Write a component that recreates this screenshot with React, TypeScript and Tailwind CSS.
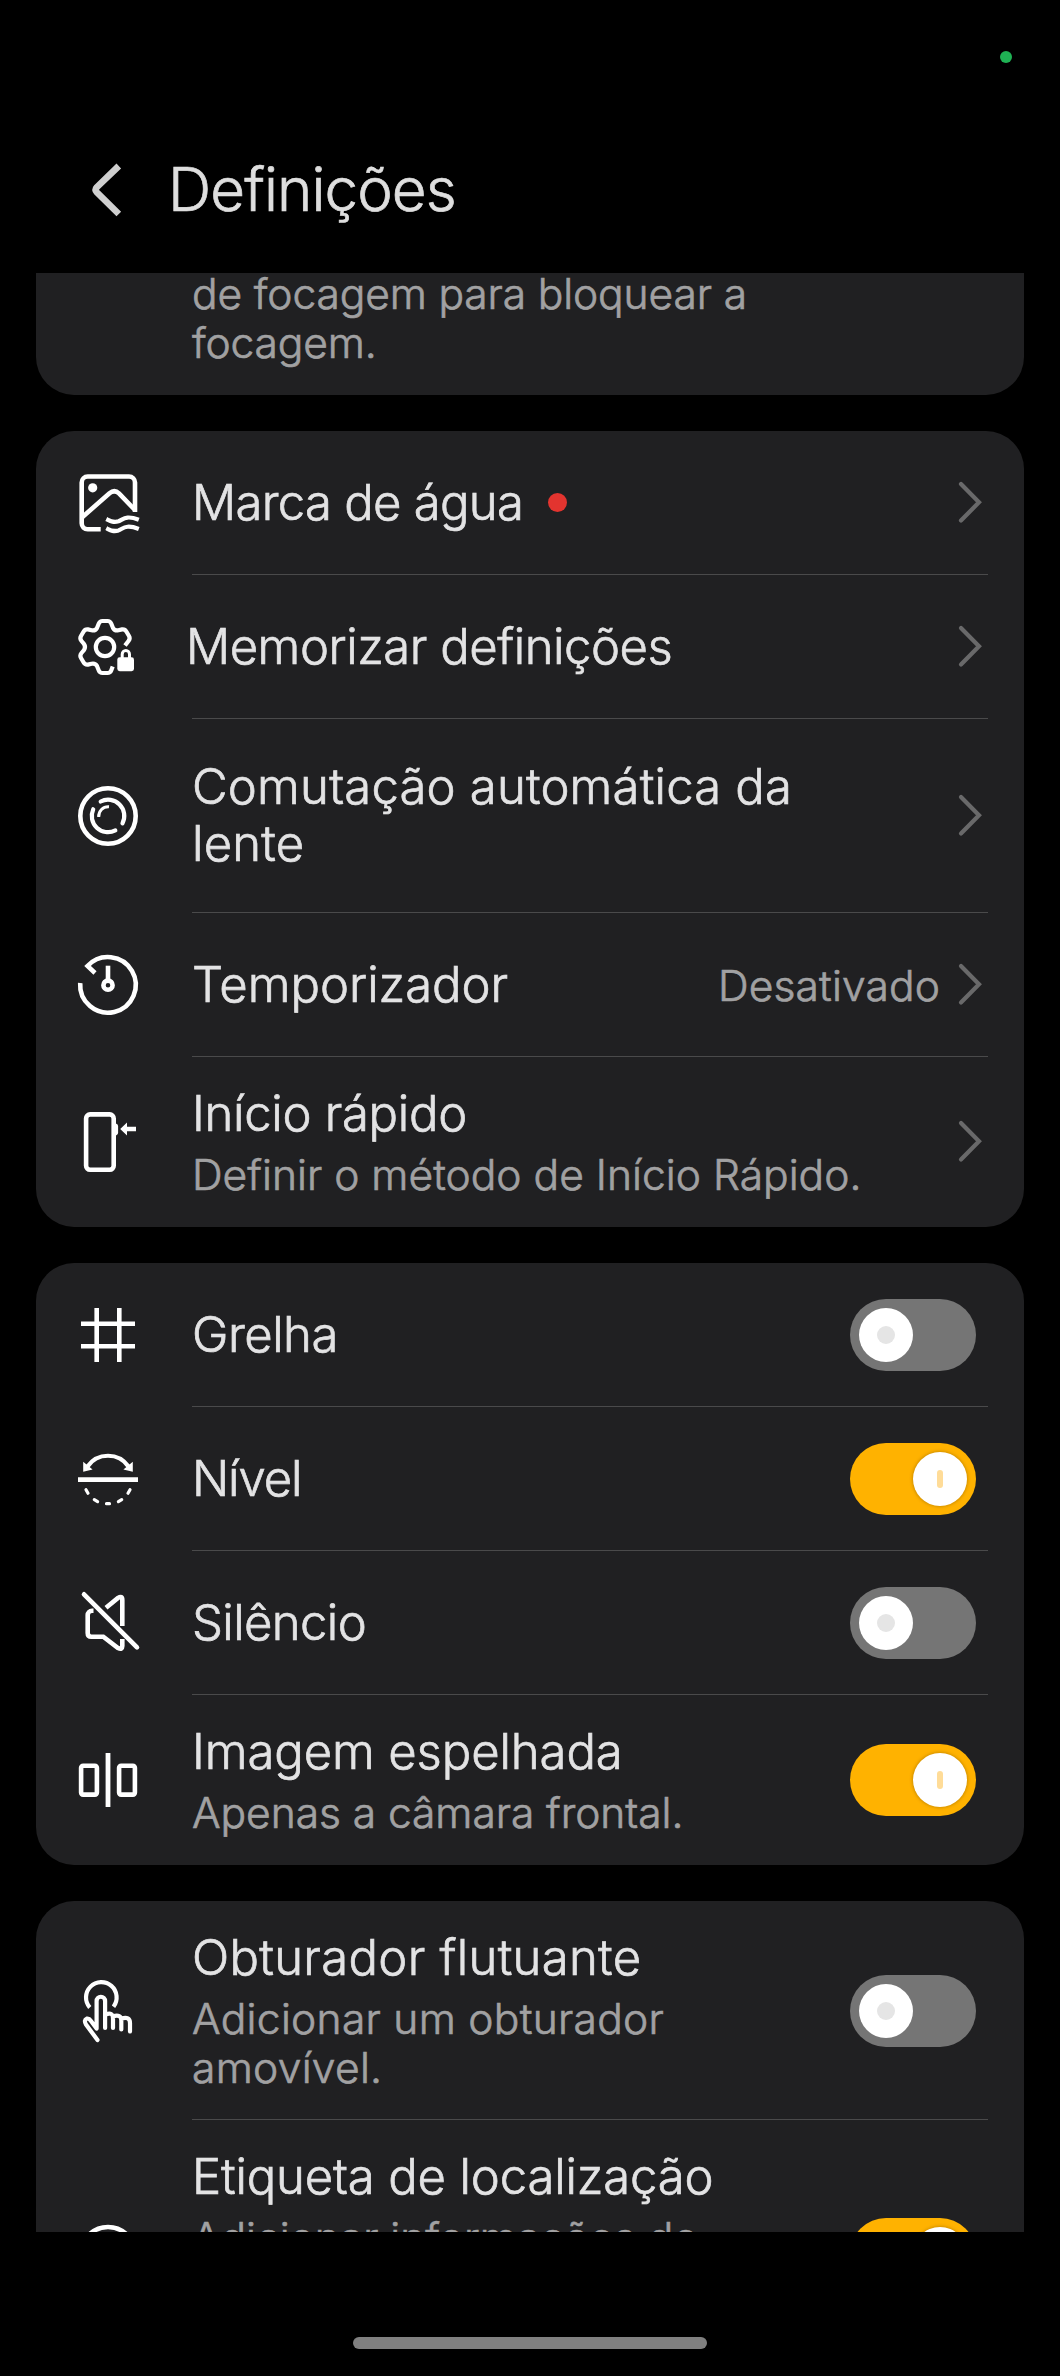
import type { ReactNode } from "react";

type Row = {
  id: string;
  title: string;
  titleClass?: string;
  description?: string;
  descriptionClass?: string;
  icon: ReactNode;
  value?: string;
  badge?: boolean;
  checked?: boolean;
};

function Icon({ children }: { children: ReactNode }) {
  return (
    <svg
      viewBox="0 0 72 72"
      className="size-[72px] shrink-0"
      fill="none"
      stroke="#fff"
      strokeWidth="4.6"
      aria-hidden
    >
      {children}
    </svg>
  );
}

const watermarkIcon = (
  <Icon>
    <path d="M63 45V15.5a6 6 0 0 0-6-6H15.7a6 6 0 0 0-6 6v40.8a6 6 0 0 0 6 6h13" />
    <path d="M10.5 50 37.5 26.2q5-4 9.5.2L63.5 43.5" />
    <circle cx="20.7" cy="20.8" r="4.6" fill="#fff" stroke="none" />
    <path
      d="M34.3 52c4 2 7 4 12.2 2.2c5-2 7.5-6.4 20.3-1.4M34.3 61.2c4 2 7 4 12.2 2.2c5-2 7.5-6.4 20.3-1.4"
      strokeWidth="4.2"
    />
  </Icon>
);

const gearLockIcon = (
  <Icon>
    <path
      d="M53 34.5 56.5 30Q58.5 27.5 57 25L54.5 20.7Q53 18 50 18.4L46.5 19.3Q42.5 20 41 17L39.2 12.5Q38.2 10 35.5 10H30.5Q27.8 10 26.8 12.5L25 17Q23.5 20 19.5 19.3L16 18.4Q13 18 11.5 20.7L9 25Q7.5 27.5 9.5 30L12 33Q14 36 12 39L9.5 42Q7.5 44.5 9 47L11.5 51.3Q13 54 16 53.6L19.5 52.7Q23.5 52 25 55L26.8 59.5Q27.8 62 30.5 62H35.5Q38.2 62 39.2 59.5L40.7 55.5"
      strokeWidth="4.2"
    />
    <circle cx="33" cy="36" r="9.2" strokeWidth="4.2" />
    <rect x="45.3" y="46.3" width="16.7" height="13.9" rx="2.4" fill="#fff" stroke="none" />
    <path d="M50.2 47.5v-4.3a3.65 3.65 0 0 1 7.3 0v4.3" strokeWidth="3" />
  </Icon>
);

const lensIcon = (
  <Icon>
    <circle cx="36" cy="36" r="27.7" />
    <path
      d="M28.7 21.5A16.2 16.2 0 0 1 50.5 43.3M21.2 29.3A16.2 16.2 0 0 0 43.3 50.4"
      strokeWidth="4.2"
      strokeLinecap="round"
    />
    <path d="M26.7 37A9.6 9.6 0 0 1 37 26.7" strokeWidth="3" />
  </Icon>
);

const timerIcon = (
  <Icon>
    <path d="M8.2 34A27.8 27.8 0 1 0 15.5 17L23 24" />
    <path d="M36 16.7V31" />
    <circle cx="36" cy="36.2" r="4.6" />
  </Icon>
);

const quickLaunchIcon = (
  <Icon>
    <rect x="14.1" y="8.4" width="27.6" height="55.4" rx="4" />
    <path d="M43 17.3q3.1.6 3.1 3.2v6q0 2.6-3.1 3.2z" fill="#fff" stroke="none" />
    <path d="M48.2 23 55 16.6V20.8H64V25.3H55V29.4Z" fill="#fff" stroke="none" />
  </Icon>
);

const gridIcon = (
  <Icon>
    <path d="M24.7 9v54M47.3 9v54M9 24.7h54M9 47.2h54" />
  </Icon>
);

const levelIcon = (
  <Icon>
    <path d="M6 36.7h60" strokeWidth="4.8" />
    <path d="M15.5 23.5A24.9 24.9 0 0 1 56.5 23.5" strokeWidth="4.2" />
    <path d="M11.2 18.8V28.8L20.6 26.4ZM60.8 18.8V28.8L51.4 26.4Z" fill="#fff" stroke="none" />
    <path
      d="M14 46.7l2 3.5M22.3 56.6l3.3 2M34.5 60.7h3M49.7 56.6l-3.3 2M58 46.7l-2 3.5"
      strokeWidth="3.2"
      strokeLinecap="round"
    />
  </Icon>
);

const muteIcon = (
  <Icon>
    <path d="M34 20.8 46 10.9Q50.3 8.3 50.3 13V39" />
    <path d="M21.5 23.8H20a4.3 4.3 0 0 0-4.3 4.3V46q0 3.7 3.6 3.7H31.3L46 61Q50.3 63.3 50.3 59V52" />
    <path d="M12 7.3 65 60.4" strokeLinecap="round" />
  </Icon>
);

const mirrorIcon = (
  <Icon>
    <rect x="9.1" y="21.8" width="15.8" height="28.8" rx="2" />
    <rect x="47.1" y="21.8" width="15.8" height="28.8" rx="2" />
    <path d="M36 9v54" strokeWidth="4.8" />
  </Icon>
);

const touchIcon = (
  <Icon>
    <g strokeWidth="4.2" strokeLinecap="round" strokeLinejoin="round">
      <path d="M17.8 32.5A15.3 15.3 0 1 1 41.5 31.7" strokeLinecap="butt" />
      <path d="M25.5 65 14 49.5Q11.5 45 14.8 43.6Q17 43 19 46L24.6 53.5V26a4.25 4.25 0 0 1 8.5 0V53" />
      <path d="M33.5 39.5Q41 36.5 41 43.5V53M41 41.3Q49.3 39 49.3 45.5V54.5M49.3 43.5Q58 41 58 48V56.5" />
    </g>
  </Icon>
);

const locationIcon = (
  <Icon>
    <path d="M36 66C20 53 9.5 45 9.5 34.5a26.5 25.5 0 0 1 53 0C62.5 45 52 53 36 66Z" />
    <circle cx="36" cy="34" r="9" />
  </Icon>
);

const shootingRows: Row[] = [
  {
    id: "watermark",
    title: "Marca de água",
    titleClass: "tracking-[-0.7px]",
    icon: watermarkIcon,
    badge: true,
  },
  {
    id: "memory",
    title: "Memorizar definições",
    titleClass: "-ml-1.5 tracking-[-0.45px]",
    icon: gearLockIcon,
  },
  {
    id: "lens",
    title: "Comutação automática da\nlente",
    titleClass: "tracking-[0.2px]",
    icon: lensIcon,
  },
  { id: "timer", title: "Temporizador", icon: timerIcon, value: "Desativado" },
  {
    id: "quick",
    title: "Início rápido",
    titleClass: "tracking-[-0.3px]",
    description: "Definir o método de Início Rápido.",
    descriptionClass: "tracking-[0.03px]",
    icon: quickLaunchIcon,
  },
];

const displayRows: Row[] = [
  { id: "grid", title: "Grelha", titleClass: "tracking-[-0.5px]", icon: gridIcon, checked: false },
  { id: "level", title: "Nível", titleClass: "tracking-[-1.1px]", icon: levelIcon, checked: true },
  { id: "mute", title: "Silêncio", titleClass: "tracking-[-0.6px]", icon: muteIcon, checked: false },
  {
    id: "mirror",
    title: "Imagem espelhada",
    titleClass: "tracking-[-0.1px]",
    description: "Apenas a câmara frontal.",
    descriptionClass: "tracking-[-0.05px]",
    icon: mirrorIcon,
    checked: true,
  },
];

const extraRows: Row[] = [
  {
    id: "floating",
    title: "Obturador flutuante",
    titleClass: "tracking-[0.3px]",
    description: "Adicionar um obturador\namovível.",
    descriptionClass: "tracking-[0.3px]",
    icon: touchIcon,
    checked: false,
  },
  {
    id: "location",
    title: "Etiqueta de localização",
    titleClass: "tracking-[-0.15px]",
    description: "Adicionar informações de\nlocalização às fotografias\ne vídeos.",
    icon: locationIcon,
    checked: true,
  },
];

function Toggle({ checked }: { checked: boolean }) {
  return (
    <div
      role="switch"
      aria-checked={checked}
      className={`mr-3 flex h-[72px] w-[126px] shrink-0 items-center rounded-full px-[9px] ${
        checked ? "justify-end bg-[#ffb200]" : "justify-start bg-[#757575]"
      }`}
    >
      <div
        className={`flex size-[54px] items-center justify-center rounded-full bg-white ${
          checked ? "shadow-[0_0_3px_1px_rgba(120,80,0,0.35)]" : ""
        }`}
      >
        <span
          className={
            checked
              ? "h-[18px] w-1.5 rounded-full bg-[#ffdc98]"
              : "size-[18px] rounded-full bg-[#e5e5e5]"
          }
        />
      </div>
    </div>
  );
}

function Chevron() {
  return (
    <svg
      viewBox="0 0 36 48"
      className="h-12 w-9 shrink-0"
      fill="none"
      stroke="#69696a"
      strokeWidth="4.2"
      strokeLinecap="round"
      aria-hidden
    >
      <path d="M9 5 27 23.3 9 41.5" />
    </svg>
  );
}

function SettingRow({ row, last }: { row: Row; last: boolean }) {
  return (
    <div className="flex items-stretch px-9">
      <div className="mr-12 flex items-center">{row.icon}</div>
      <div
        className={`flex min-h-36 flex-1 items-center ${
          last ? "" : "shadow-[inset_0_-1px_0_#4a4a4b]"
        }`}
      >
        <div className={`flex-1 ${row.description ? "py-7" : "pt-[39px] pb-[41px]"}`}>
          <div className="flex items-center">
            <h2
              className={`text-[49px] leading-[57px] whitespace-pre text-[#e3e3e4] ${row.titleClass ?? ""}`}
            >
              {row.title}
            </h2>
            {row.badge && <span className="ml-[25px] size-[19px] rounded-full bg-[#e3342f]" />}
          </div>
          {row.description && (
            <p
              className={`mt-2 text-[42.5px] leading-[49px] whitespace-pre text-[#a1a1a2] ${row.descriptionClass ?? ""}`}
            >
              {row.description}
            </p>
          )}
        </div>
        {row.value && (
          <span className="mr-3 text-[42.5px] leading-[49px] tracking-[0.15px] text-[#a1a1a2]">
            {row.value}
          </span>
        )}
        {row.checked === undefined ? <Chevron /> : <Toggle checked={row.checked} />}
      </div>
    </div>
  );
}

function Card({ rows }: { rows: Row[] }) {
  return (
    <section className="rounded-[38px] bg-[#202022]">
      {rows.map((row, i) => (
        <SettingRow key={row.id} row={row} last={i === rows.length - 1} />
      ))}
    </section>
  );
}

export default function App() {
  return (
    <div className="flex h-[2376px] w-[1060px] flex-col overflow-hidden bg-black font-['Inter',sans-serif] font-light [-webkit-text-stroke:0.7px_currentColor]">
      <div className="flex h-[114px] shrink-0 items-center justify-end pr-12">
        <span className="size-3 rounded-full bg-[#1fb254]" />
      </div>

      <header className="flex h-[159px] shrink-0 items-start pt-[39px] pl-[84px]">
        <svg
          viewBox="0 0 48 72"
          className="h-[72px] w-12 shrink-0"
          fill="none"
          stroke="#cfcfcf"
          strokeWidth="6.6"
          aria-hidden
        >
          <path d="M34.8 13 12.8 34.2Q10.5 36.8 12.8 39.3L34.8 61" />
        </svg>
        <h1 className="ml-9 text-[60px] leading-[72px] tracking-[-0.9px] text-[#dedede]">
          Definições
        </h1>
      </header>

      <main className="flex h-[1959px] shrink-0 flex-col gap-9 overflow-hidden px-9">
        <section className="rounded-b-[38px] bg-[#202022] pb-7 pl-[156px]">
          <p className="-mt-1 text-[42.5px] leading-[49px] tracking-[-0.12px] whitespace-pre text-[#a1a1a2]">
            {"de focagem para bloquear a\nfocagem."}
          </p>
        </section>
        <Card rows={shootingRows} />
        <Card rows={displayRows} />
        <Card rows={extraRows} />
      </main>

      <footer className="flex flex-1 items-end justify-center pb-[27px]">
        <div className="h-3 w-[354px] rounded-full bg-[#808080]" />
      </footer>
    </div>
  );
}
